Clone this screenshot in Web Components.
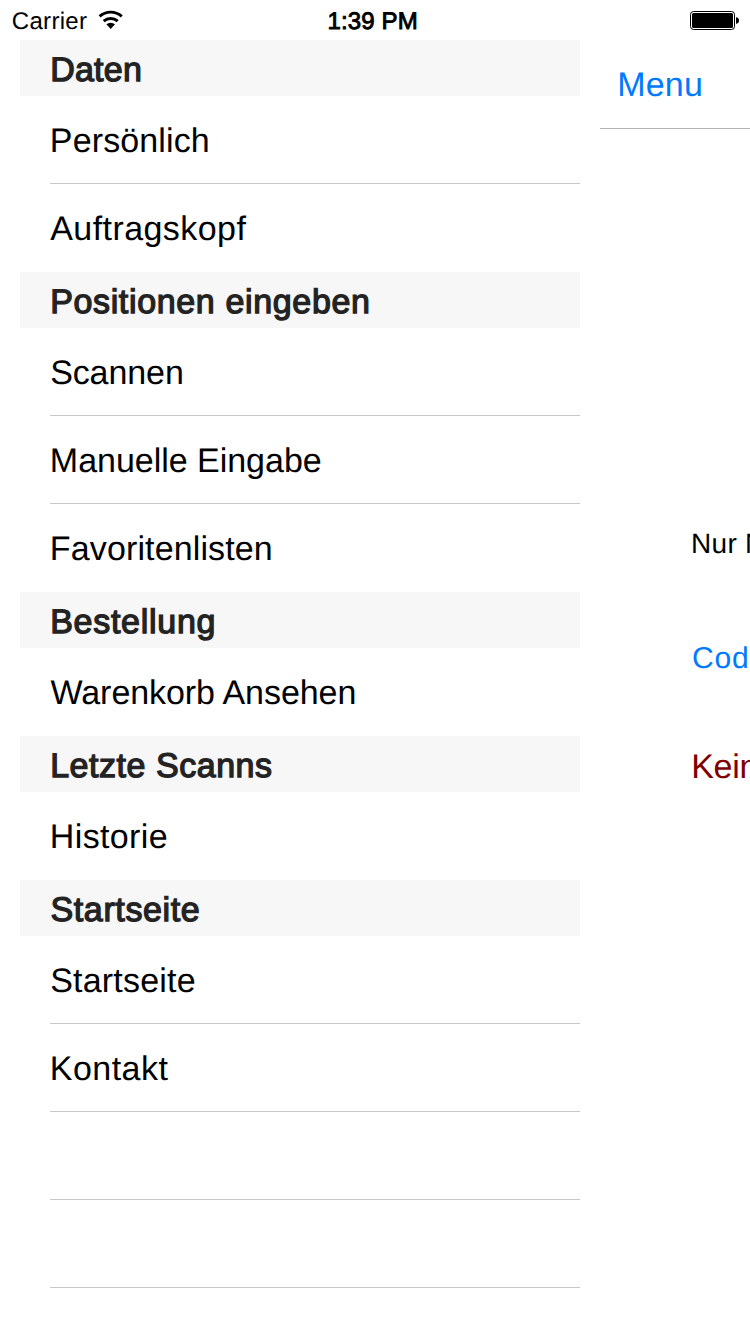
<!DOCTYPE html>
<html lang="de">
<head>
<meta charset="utf-8">
<title>Menu</title>
<style>
html,body{margin:0;background:#fff}
body{font-family:"Liberation Sans",Arial,sans-serif;width:750px;height:1334px;overflow:hidden;text-rendering:geometricPrecision}
</style>
</head>
<body>
<app-screen></app-screen>
<script>
const define = (name, html, extra) => {
  const t = document.createElement('template');
  t.innerHTML = html;
  customElements.define(name, class extends HTMLElement {
    constructor() {
      super();
      this.attachShadow({mode: 'open'}).append(t.content.cloneNode(true));
    }
    connectedCallback() { if (extra) extra(this); }
  });
};

// Text whose visible glyphs span from "from" to "to", measured from the host's left edge.
// Measured at ten times the size, as the canvas rounds glyph bounds to whole pixels.
const measure = document.createElement('canvas').getContext('2d');
define('fit-text', `<style>
:host{display:block;white-space:nowrap}
</style><slot></slot>`, el => {
  const cs = getComputedStyle(el);
  measure.font = cs.fontWeight + ' ' + parseFloat(cs.fontSize) * 10 + 'px "Liberation Sans"';
  const text = el.textContent;
  const m = measure.measureText(text);
  const left = m.actualBoundingBoxLeft / 10, right = m.actualBoundingBoxRight / 10;
  const from = +el.getAttribute('from'), to = +el.getAttribute('to');
  el.style.letterSpacing = ((to - from - left - right) / (text.length - 1)).toFixed(3) + 'px';
  el.style.marginLeft = (from + left).toFixed(2) + 'px';
});

define('wifi-icon', `<style>:host{display:block;width:26px;height:20px}svg{display:block}</style>
<svg width="26" height="20" viewBox="0 0 26 20">
<g fill="none" stroke="#000" stroke-width="2.9">
<path d="M1.6 6.3A16.9 16.9 0 0 1 23.8 6.3"/><path d="M5.7 11.1A10.6 10.6 0 0 1 19.7 11.1"/></g>
<path d="M8.4 14.3A6.5 6.5 0 0 1 17 14.3L12.7 19Z"/></svg>`);

define('battery-icon', `<style>:host{display:block;width:49px;height:19px}svg{display:block}</style>
<svg width="49" height="19" viewBox="0 0 49 19">
<rect x=".5" y=".5" width="44" height="18" rx="3" fill="#fff" stroke="#000"/>
<rect x="2" y="2" width="41" height="15" rx="1.5"/>
<path d="M46 6.2Q49 6.6 49 9.5T46 12.8Z"/></svg>`);

define('status-bar', `<style>
:host{display:grid;grid-template-columns:98px 230px 362px 1fr;height:40px;font-size:24px;line-height:43px;color:#000}
.time{-webkit-text-stroke:.9px #000}
wifi-icon{margin-top:10px}
battery-icon{margin-top:11px}
</style>
<fit-text from="13" to="86.6">Carrier</fit-text><wifi-icon></wifi-icon>
<fit-text class="time" from="1.4" to="87.8">1:39 PM</fit-text><battery-icon></battery-icon>`);

define('menu-heading', `<style>
:host{display:block;box-sizing:border-box;height:56px;padding-left:30px;background:#f7f7f7;color:#232323;font-size:34px;line-height:60px;-webkit-text-stroke:1.3px #232323}
</style><slot></slot>`);

define('menu-row', `<style>
:host{display:block;box-sizing:border-box;height:88px;margin-left:30px;border-bottom:1px solid #c8c7cc;font-size:34px;line-height:90px;color:#000}
:host([last]){border-bottom-color:transparent}
</style><slot></slot>`);

define('side-menu', `<style>
:host{display:block;width:560px;margin-left:20px}
</style>
<menu-heading><fit-text from="2.8" to="90">Daten</fit-text></menu-heading>
<menu-row><fit-text from="2.5" to="157.8">Persönlich</fit-text></menu-row>
<menu-row last><fit-text from="0.2" to="196">Auftragskopf</fit-text></menu-row>
<menu-heading><fit-text from="2.8" to="318">Positionen eingeben</fit-text></menu-heading>
<menu-row><fit-text from="1.2" to="131.9">Scannen</fit-text></menu-row>
<menu-row><fit-text from="2.5" to="270.3">Manuelle Eingabe</fit-text></menu-row>
<menu-row last><fit-text from="2.5" to="220.8">Favoritenlisten</fit-text></menu-row>
<menu-heading><fit-text from="2.8" to="163.6">Bestellung</fit-text></menu-heading>
<menu-row last><fit-text from="0.5" to="306.3">Warenkorb Ansehen</fit-text></menu-row>
<menu-heading><fit-text from="2.8" to="221">Letzte Scanns</fit-text></menu-heading>
<menu-row last><fit-text from="2.5" to="116.2">Historie</fit-text></menu-row>
<menu-heading><fit-text from="1.5" to="148.4">Startseite</fit-text></menu-heading>
<menu-row><fit-text from="1.2" to="144.2">Startseite</fit-text></menu-row>
<menu-row><fit-text from="2.5" to="118">Kontakt</fit-text></menu-row>
<menu-row></menu-row>
<menu-row></menu-row>`);

define('content-panel', `<style>
:host{display:flex;flex-direction:column;width:150px;margin-left:20px;overflow:hidden}
header{box-sizing:border-box;height:89px;border-bottom:1px solid #b2b2b2;color:#007aff;font-size:34px;line-height:90px}
.hint{margin-top:395px;font-size:28px;line-height:40px;color:#000}
.code{margin-top:75px;font-size:30px;line-height:40px;color:#007aff}
.none{margin-top:68px;font-size:34px;line-height:40px;color:#800000}
</style>
<header><fit-text from="19.8" to="101">Menu</fit-text></header>
<fit-text class="hint" from="93.3" to="163">Nur N</fit-text>
<fit-text class="code" from="93.3" to="147">Cod</fit-text>
<fit-text class="none" from="93.8" to="156.5">Kein</fit-text>`);

define('app-screen', `<style>
:host{display:flex;flex-direction:column;width:750px;height:1334px;overflow:hidden;background:#fff}
main{display:flex;flex:1}
side-menu,content-panel{flex:none}
</style>
<status-bar></status-bar>
<main><side-menu></side-menu><content-panel></content-panel></main>`);
</script>
</body>
</html>
